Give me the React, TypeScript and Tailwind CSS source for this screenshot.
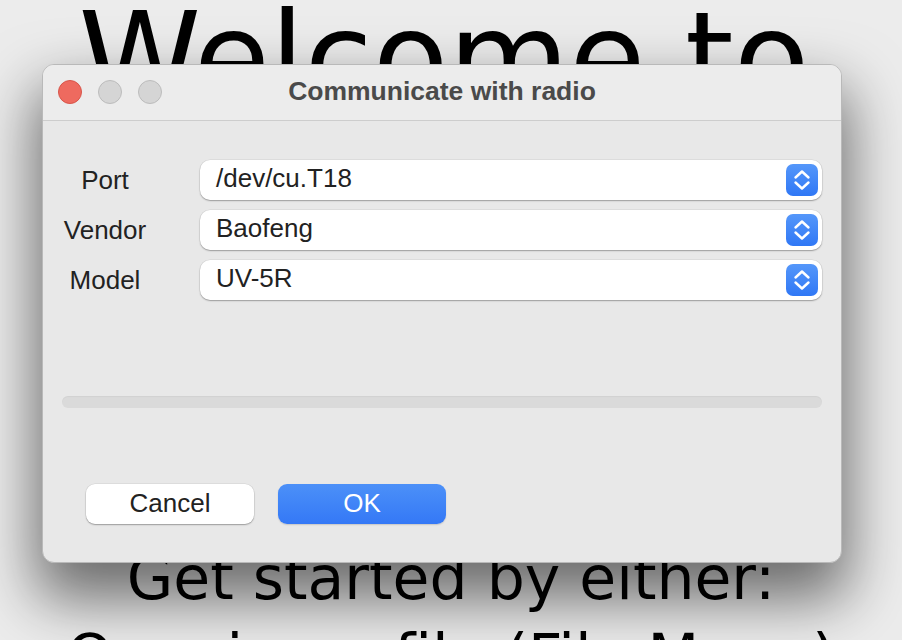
import React from "react";

const rows = [
  { label: "Port", value: "/dev/cu.T18" },
  { label: "Vendor", value: "Baofeng" },
  { label: "Model", value: "UV-5R" },
];

const Stepper = () => (
  <div className="flex h-[32px] w-[32px] items-center justify-center rounded-[7px] bg-gradient-to-b from-[#5597fa] to-[#2f77f5]">
    <svg width="32" height="32" viewBox="0 0 32 32" fill="none">
      <path
        d="M9.5 13.5 L16 7.5 L22.5 13.5 M9.5 18.5 L16 24.5 L22.5 18.5"
        stroke="white"
        strokeWidth="2.4"
        strokeLinecap="round"
        strokeLinejoin="round"
      />
    </svg>
  </div>
);

const SelectBox = ({ value }: { value: string }) => (
  <div className="flex h-[40px] flex-1 items-center justify-between rounded-[10px] bg-white pl-[16px] pr-[4px] shadow-[0_1px_1.5px_rgba(0,0,0,0.3),0_0_0_0.5px_rgba(0,0,0,0.08)]">
    <span className="pb-[4px] text-[26px] leading-none text-[#222]">{value}</span>
    <Stepper />
  </div>
);

const Dialog = () => {
  return (
    <div className="absolute left-[42px] top-[64px] flex h-[499px] w-[800px] flex-col overflow-hidden rounded-[12px] border border-[#b9b9b9] bg-[#e8e8e8] font-['Liberation_Sans',Arial,sans-serif] shadow-[0_30px_60px_6px_rgba(0,0,0,0.55)]">
      <div className="relative flex h-[56px] items-center justify-center border-b border-[#cdcdcd] bg-[#ececec]">
        <div className="absolute left-[15px] top-[15px] flex gap-[16px]">
          <span className="h-[24px] w-[24px] rounded-full border border-[#d8554a] bg-[#ee6a5f]" />
          <span className="h-[24px] w-[24px] rounded-full border border-[#bcbcbc] bg-[#d5d5d5]" />
          <span className="h-[24px] w-[24px] rounded-full border border-[#bcbcbc] bg-[#d5d5d5]" />
        </div>
        <h1 className="pb-[3px] text-[26.5px] font-bold leading-none text-[#4a4a4a]">
          Communicate with radio
        </h1>
      </div>

      <div className="flex flex-1 flex-col px-[19px] pt-[39px]">
        <div className="flex flex-col gap-[10px]">
          {rows.map((r) => (
            <div key={r.label} className="flex items-center gap-[52px]">
              <span className="w-[86px] pb-[1px] text-center text-[26px] leading-none text-[#222]">
                {r.label}
              </span>
              <SelectBox value={r.value} />
            </div>
          ))}
        </div>

        <div className="mt-[96px] h-[12px] w-full rounded-full bg-[#dadada] shadow-[inset_0_1px_1px_rgba(0,0,0,0.04)]" />

        <div className="mt-[76px] flex gap-[24px] pl-[24px]">
          <button className="h-[40px] w-[168px] rounded-[9px] bg-white pb-[2px] text-[26px] leading-none text-[#222] shadow-[0_1px_1.5px_rgba(0,0,0,0.3),0_0_0_0.5px_rgba(0,0,0,0.08)]">
            Cancel
          </button>
          <button className="h-[40px] w-[168px] rounded-[9px] bg-gradient-to-b from-[#4c90f8] to-[#3478f6] pb-[2px] text-[26px] leading-none text-white shadow-[0_1px_1.5px_rgba(0,0,0,0.15)]">
            OK
          </button>
        </div>
      </div>
    </div>
  );
};

export default function App() {
  return (
    <div className="relative h-[640px] w-full overflow-hidden bg-[#ececec]">
      <div className="flex flex-col items-center font-['DejaVu_Sans',sans-serif] text-black">
        <p className="mt-[-12px] pr-[14px] text-[124px] leading-[140px]">Welcome to</p>
        <p className="mt-[415px] text-[60px] leading-[70px]">Get started by either:</p>
        <p className="mt-[8px] text-[60px] leading-[70px]">Opening a file (File Menu)</p>
      </div>
      <Dialog />
    </div>
  );
}
